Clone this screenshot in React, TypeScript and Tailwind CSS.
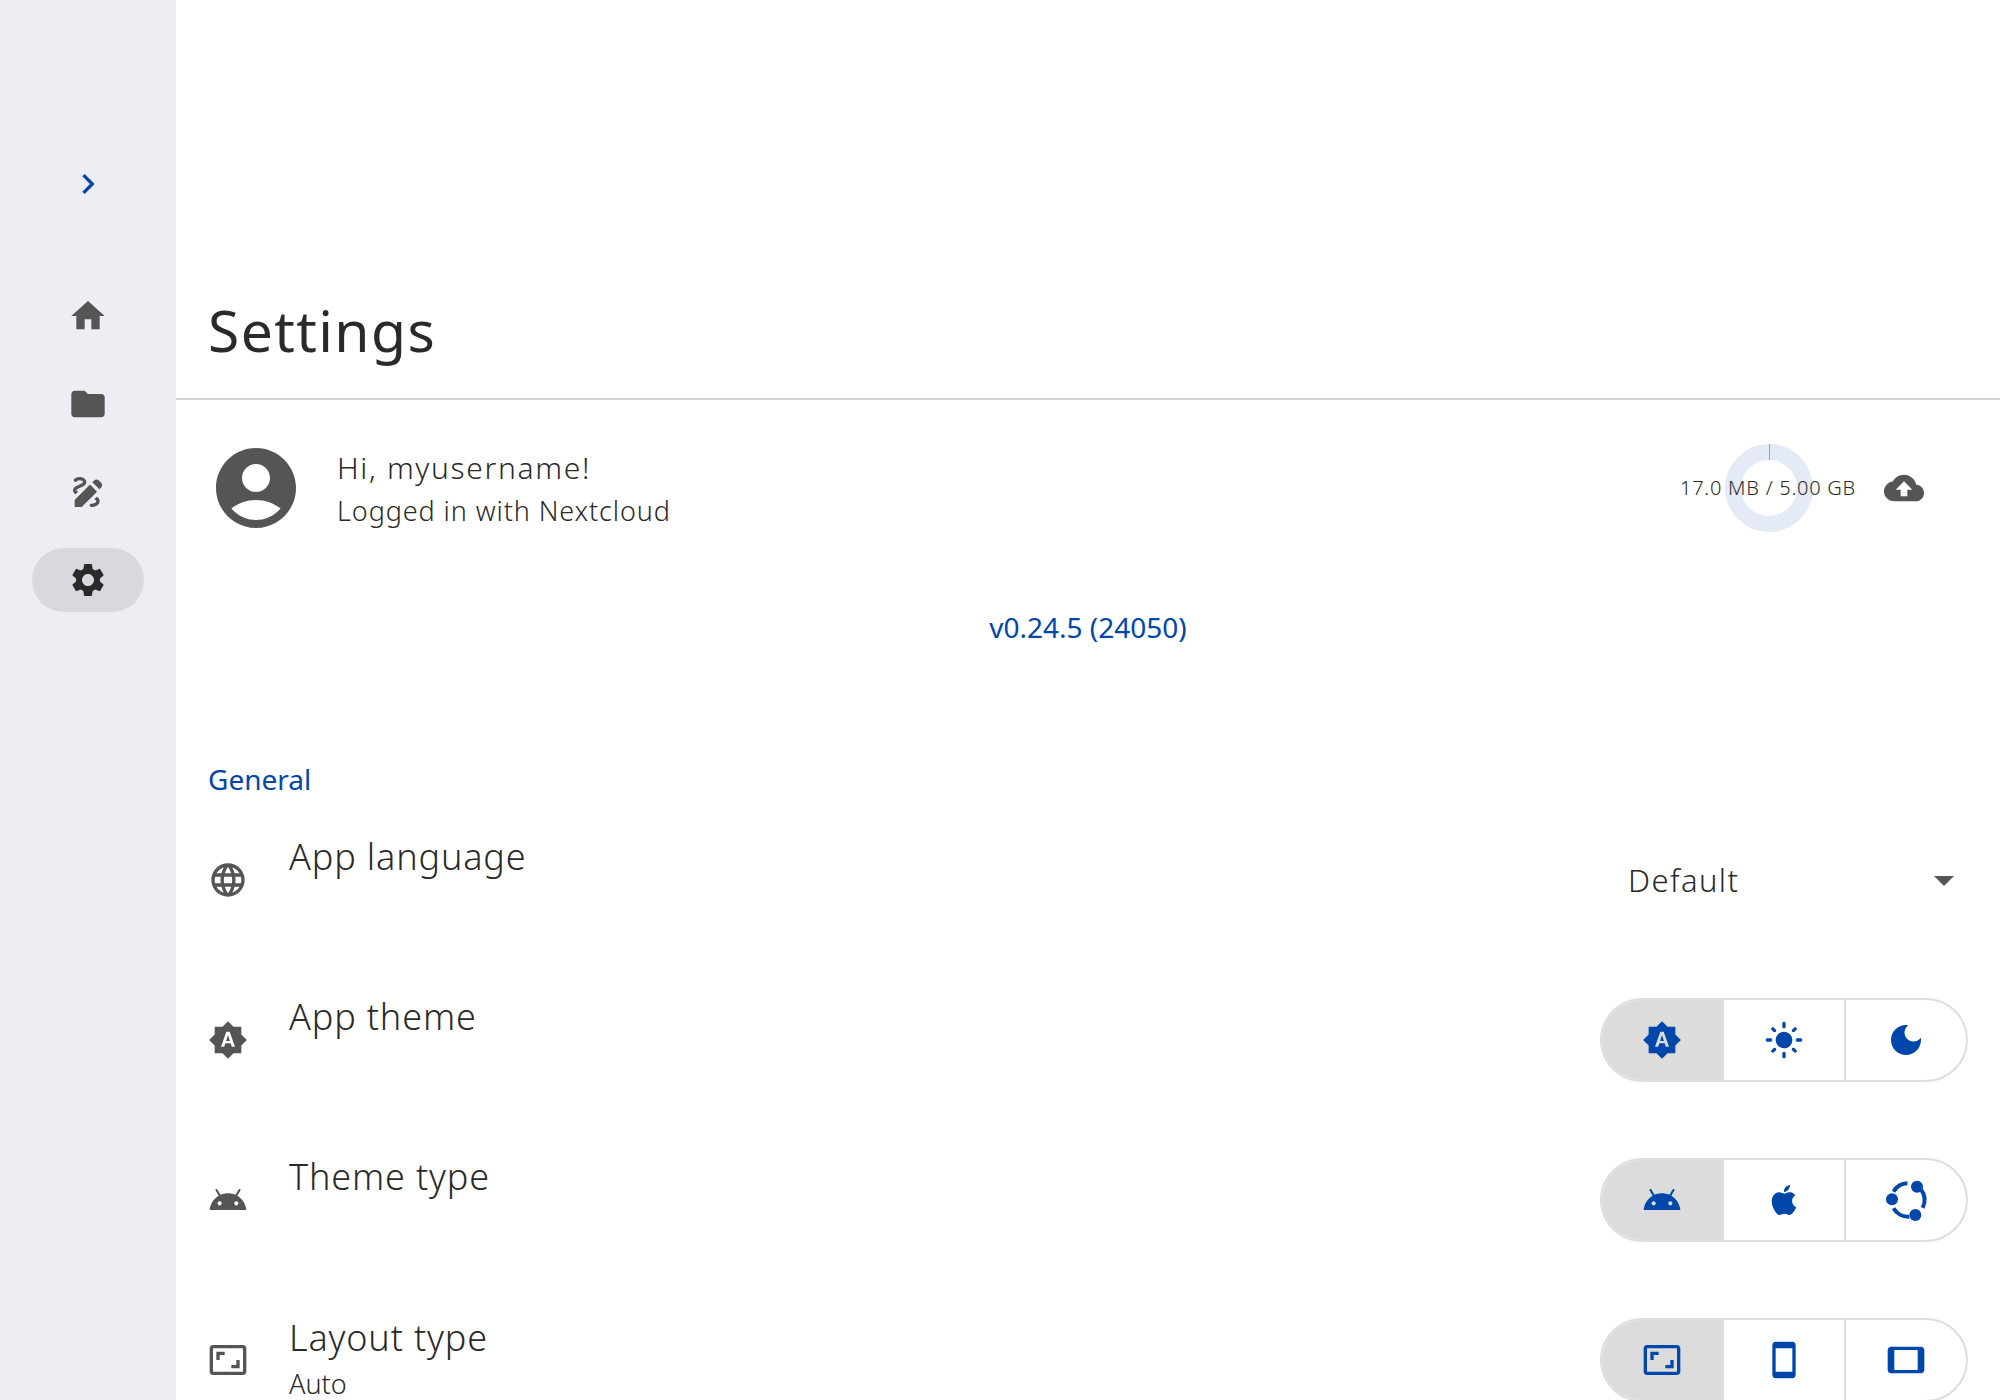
import type { ReactNode } from 'react'

const paths = {
  home: 'M10 20v-6h4v6h5v-8h3L12 3 2 12h3v8z',
  folder: 'M10 4H4c-1.1 0-1.99.9-1.99 2L2 18c0 1.1.9 2 2 2h16c1.1 0 2-.9 2-2V8c0-1.1-.9-2-2-2h-8l-2-2z',
  draw: 'M18.85 10.39l1.06-1.06c.78-.78.78-2.05 0-2.83L18.5 5.09c-.78-.78-2.05-.78-2.83 0l-1.06 1.06 4.24 4.24zm-5.66-2.83L4 16.76V21h4.24l9.19-9.19-4.24-4.25zM19 17.5c0 2.19-2.54 3.5-5 3.5-.55 0-1-.45-1-1s.45-1 1-1c1.54 0 3-.73 3-1.5 0-.47-.48-.87-1.23-1.2l1.48-1.48c1.07.63 1.75 1.47 1.75 2.68zM4.58 13.35C3.61 12.79 3 12.06 3 11c0-1.8 1.89-2.63 3.56-3.36C7.59 7.18 9 6.56 9 6c0-.41-.78-1-2-1-1.26 0-1.8.61-1.83.64-.35.41-.98.46-1.4.12-.41-.34-.49-.95-.15-1.38C3.73 4.24 4.76 3 7 3s4 1.32 4 3c0 1.87-1.93 2.72-3.64 3.47C6.42 9.88 5 10.5 5 11c0 .31.43.6 1.07.86l-1.49 1.49z',
  settings: 'M19.14 12.94c.04-.3.06-.61.06-.94 0-.32-.02-.64-.07-.94l2.03-1.58c.18-.14.23-.41.12-.61l-1.92-3.32c-.12-.22-.37-.29-.59-.22l-2.39.96c-.5-.38-1.03-.7-1.62-.94l-.36-2.54c-.04-.24-.24-.41-.48-.41h-3.84c-.24 0-.43.17-.47.41l-.36 2.54c-.59.24-1.13.57-1.62.94l-2.39-.96c-.22-.08-.47 0-.59.22L2.74 8.87c-.12.21-.08.47.12.61l2.03 1.58c-.05.3-.09.63-.09.94s.02.64.07.94l-2.03 1.58c-.18.14-.23.41-.12.61l1.92 3.32c.12.22.37.29.59.22l2.39-.96c.5.38 1.03.7 1.62.94l.36 2.54c.05.24.24.41.48.41h3.84c.24 0 .44-.17.47-.41l.36-2.54c.59-.24 1.13-.56 1.62-.94l2.39.96c.22.08.47 0 .59-.22l1.92-3.32c.12-.22.07-.47-.12-.61l-2.01-1.58zM12 15.6c-1.98 0-3.6-1.62-3.6-3.6s1.62-3.6 3.6-3.6 3.6 1.62 3.6 3.6-1.62 3.6-3.6 3.6z',
  chevron: 'M10 6L8.59 7.41 13.17 12l-4.58 4.59L10 18l6-6z',
  account: 'M12 2C6.48 2 2 6.48 2 12s4.48 10 10 10 10-4.48 10-10S17.52 2 12 2zm0 4c1.93 0 3.5 1.57 3.5 3.5S13.93 13 12 13s-3.5-1.57-3.5-3.5S10.07 6 12 6zm0 14c-2.03 0-4.43-.82-6.14-2.88C7.55 15.8 9.68 15 12 15s4.45.8 6.14 2.12C16.43 19.18 14.03 20 12 20z',
  upload: 'M19.35 10.04C18.67 6.59 15.64 4 12 4 9.11 4 6.6 5.64 5.35 8.04 2.34 8.36 0 10.91 0 14c0 3.31 2.69 6 6 6h13c2.76 0 5-2.24 5-5 0-2.64-2.05-4.78-4.65-4.96zM14 13v4h-4v-4H7l5-5 5 5h-3z',
  language: 'M11.99 2C6.47 2 2 6.48 2 12s4.47 10 9.99 10C17.52 22 22 17.52 22 12S17.52 2 11.99 2zm6.93 6h-2.95c-.32-1.25-.78-2.45-1.38-3.56 1.84.63 3.37 1.91 4.33 3.56zM12 4.04c.83 1.2 1.48 2.53 1.91 3.96h-3.82c.43-1.43 1.08-2.76 1.91-3.96zM4.26 14C4.1 13.36 4 12.69 4 12s.1-1.36.26-2h3.38c-.08.66-.14 1.32-.14 2 0 .68.06 1.34.14 2H4.26zm.82 2h2.95c.32 1.25.78 2.45 1.38 3.56-1.84-.63-3.37-1.9-4.33-3.56zm2.95-8H5.08c.96-1.66 2.49-2.93 4.33-3.56C8.81 5.55 8.35 6.75 8.03 8zM12 19.96c-.83-1.2-1.48-2.53-1.91-3.96h3.82c-.43 1.43-1.08 2.76-1.91 3.96zM14.34 14H9.66c-.09-.66-.16-1.32-.16-2 0-.68.07-1.35.16-2h4.68c.09.65.16 1.32.16 2 0 .68-.07 1.34-.16 2zm.25 5.56c.6-1.11 1.06-2.31 1.38-3.56h2.95c-.96 1.65-2.49 2.93-4.33 3.56zM16.36 14c.08-.66.14-1.32.14-2 0-.68-.06-1.34-.14-2h3.38c.16.64.26 1.31.26 2s-.1 1.36-.26 2h-3.38z',
  auto: 'M10.85 12.65h2.3L12 9l-1.15 3.65zM20 8.69V4h-4.69L12 .69 8.69 4H4v4.69L.69 12 4 15.31V20h4.69L12 23.31 15.31 20H20v-4.69L23.31 12 20 8.69zM14.3 16l-.7-2h-3.2l-.7 2H7.8L11 7h2l3.2 9h-1.9z',
  light: 'M12 7c-2.76 0-5 2.24-5 5s2.24 5 5 5 5-2.24 5-5-2.24-5-5-5zM2 13h2c.55 0 1-.45 1-1s-.45-1-1-1H2c-.55 0-1 .45-1 1s.45 1 1 1zm18 0h2c.55 0 1-.45 1-1s-.45-1-1-1h-2c-.55 0-1 .45-1 1s.45 1 1 1zM11 2v2c0 .55.45 1 1 1s1-.45 1-1V2c0-.55-.45-1-1-1s-1 .45-1 1zm0 18v2c0 .55.45 1 1 1s1-.45 1-1v-2c0-.55-.45-1-1-1s-1 .45-1 1zM5.99 4.58c-.39-.39-1.03-.39-1.41 0-.39.39-.39 1.03 0 1.41l1.06 1.06c.39.39 1.03.39 1.41 0s.39-1.03 0-1.41L5.99 4.58zm12.37 12.37c-.39-.39-1.03-.39-1.41 0-.39.39-.39 1.03 0 1.41l1.06 1.06c.39.39 1.03.39 1.41 0 .39-.39.39-1.03 0-1.41l-1.06-1.06zm1.06-10.96c.39-.39.39-1.03 0-1.41-.39-.39-1.03-.39-1.41 0l-1.06 1.06c-.39.39-.39 1.03 0 1.41s1.03.39 1.41 0l1.06-1.06zM7.05 18.36c.39-.39.39-1.03 0-1.41-.39-.39-1.03-.39-1.41 0l-1.06 1.06c-.39.39-.39 1.03 0 1.41s1.03.39 1.41 0l1.06-1.06z',
  dark: 'M12 3c-4.97 0-9 4.03-9 9s4.03 9 9 9 9-4.03 9-9c0-.46-.04-.92-.1-1.36-.98 1.37-2.58 2.26-4.4 2.26-2.98 0-5.4-2.42-5.4-5.4 0-1.81.89-3.42 2.26-4.4-.44-.06-.9-.1-1.36-.1z',
  android: 'M17.6 9.48l1.84-3.18c.16-.31.04-.69-.26-.85-.29-.15-.65-.06-.83.22l-1.88 3.24c-2.86-1.21-6.08-1.21-8.94 0L5.65 5.67c-.19-.29-.58-.38-.87-.2-.28.18-.37.54-.22.83L6.4 9.48C3.3 11.25 1.34 14.44 1 18h22c-.34-3.56-2.3-6.75-5.4-8.52zM7 15.25c-.69 0-1.25-.56-1.25-1.25s.56-1.25 1.25-1.25 1.25.56 1.25 1.25-.56 1.25-1.25 1.25zm10 0c-.69 0-1.25-.56-1.25-1.25s.56-1.25 1.25-1.25 1.25.56 1.25 1.25-.56 1.25-1.25 1.25z',
  apple: 'M18.71 19.5c-.83 1.24-1.71 2.45-3.05 2.47-1.34.03-1.77-.79-3.29-.79-1.53 0-2 .77-3.27.82-1.31.05-2.3-1.32-3.14-2.53C4.25 17 2.94 12.45 4.7 9.39c.87-1.52 2.43-2.48 4.12-2.51 1.28-.02 2.5.87 3.29.87.78 0 2.26-1.07 3.81-.91.65.03 2.47.26 3.64 1.98-.09.06-2.17 1.28-2.15 3.81.03 3.02 2.65 4.03 2.68 4.04-.03.07-.42 1.44-1.38 2.83M13 3.5c.73-.83 1.94-1.46 2.94-1.5.13 1.17-.34 2.35-1.04 3.19-.69.85-1.83 1.51-2.95 1.42-.15-1.15.41-2.35 1.05-3.11z',
  aspect: 'M19 12h-2v3h-3v2h5v-5zM7 9h3V7H5v5h2V9zm14-6H3c-1.1 0-2 .9-2 2v14c0 1.1.9 2 2 2h18c1.1 0 2-.9 2-2V5c0-1.1-.9-2-2-2zm0 16.01H3V4.99h18v14.02z',
  phone: 'M17 1.01L7 1c-1.1 0-2 .9-2 2v18c0 1.1.9 2 2 2h10c1.1 0 2-.9 2-2V3c0-1.1-.9-1.99-2-1.99zM17 19H7V5h10v14z',
  tablet: 'M21 4H3c-1.1 0-2 .9-2 2v12c0 1.1.9 2 2 2h18c1.1 0 1.99-.9 1.99-2L23 6c0-1.1-.9-2-2-2zm-2 14H5V6h14v12z',
  caret: 'M7 10l5 5 5-5z',
}

type IconName = keyof typeof paths

function Icon({ name, className }: { name: IconName; className: string }) {
  return (
    <svg viewBox="0 0 24 24" fill="currentColor" className={className}>
      <path d={paths[name]} />
    </svg>
  )
}

function UbuntuIcon() {
  return (
    <svg viewBox="0 0 24 24" className="h-10 w-10 overflow-visible text-[#0047ab]" fill="currentColor">
      <g fill="none" stroke="currentColor" strokeWidth="2.4">
        <path d="M4.5 7A10 10 0 0 1 12.9 2" />
        <path d="M20.9 5.6A10 10 0 0 1 22 16.7" />
        <path d="M14 22A10 10 0 0 1 4.5 17" />
      </g>
      <circle cx="18.6" cy="4" r="3.6" />
      <circle cx="17.6" cy="21" r="3.6" />
      <circle cx="3.6" cy="11.6" r="3.6" />
    </svg>
  )
}

function NavItem({ name, active }: { name: IconName; active?: boolean }) {
  return (
    <div className={`flex h-16 w-[112px] items-center justify-center rounded-full ${active ? 'bg-[#d9d8de]' : ''}`}>
      <Icon name={name} className={`h-10 w-10 ${active ? 'text-[#2a2a2a]' : 'text-[#555555]'}`} />
    </div>
  )
}

function Segmented({ items }: { items: ReactNode[] }) {
  return (
    <div className="flex h-[84px] w-[368px] shrink-0 overflow-hidden rounded-full border-2 border-[#dedede]">
      {items.map((item, i) => (
        <div
          key={i}
          className={`flex flex-1 items-center justify-center ${i === 0 ? 'bg-[#dcdcdc]' : 'border-l-2 border-[#dedede]'}`}
        >
          {item}
        </div>
      ))}
    </div>
  )
}

function SegIcon({ name }: { name: IconName }) {
  return <Icon name={name} className="h-10 w-10 text-[#0047ab]" />
}

function Row({ icon, label, sub, children }: { icon: IconName; label: string; sub?: string; children: ReactNode }) {
  return (
    <div className="flex h-40 shrink-0 items-center pl-[208px] pr-8">
      <Icon name={icon} className="h-10 w-10 shrink-0 text-[#555555]" />
      <div className={`ml-10 flex-1 self-start pl-px text-[#2a2a2a] ${sub ? 'pt-[35px]' : 'pt-[34px]'}`}>
        <div className="text-[36px] leading-[46px] font-light tracking-[0.85px]">{label}</div>
        {sub && <div className="mt-[6px] text-[27px] leading-[34px] font-light">{sub}</div>}
      </div>
      {children}
    </div>
  )
}

export default function App() {
  return (
    <div className="flex h-[1400px] w-[2000px] overflow-hidden bg-white font-['Noto_Sans',sans-serif] text-[#2a2a2a]">
      <aside className="flex w-[176px] shrink-0 flex-col items-center gap-6 bg-[#eeedf3] pt-[164px]">
        <Icon name="chevron" className="mb-14 h-10 w-10 text-[#0047ab]" />
        <NavItem name="home" />
        <NavItem name="folder" />
        <NavItem name="draw" />
        <NavItem name="settings" active />
      </aside>

      <main className="relative flex flex-1 flex-col">
        <div className="flex h-[400px] shrink-0 items-end border-b-2 border-[#d4d4d4] pb-[28px] pl-8">
          <h1 className="text-[57px] leading-[80px] font-normal tracking-[1.4px]">Settings</h1>
        </div>

        <div className="flex h-[176px] shrink-0 items-center pl-8 pr-[76px]">
          <Icon name="account" className="h-24 w-24 shrink-0 text-[#555555]" />
          <div className="ml-[33px] flex-1">
            <div className="text-[30px] leading-[44px] font-light tracking-[1.65px]">Hi, myusername!</div>
            <div className="mt-px text-[27px] leading-[40px] font-light tracking-[0.9px]">Logged in with Nextcloud</div>
          </div>
          <div className="relative flex h-[88px] items-center">
            <div className="absolute top-0 left-[45px] h-[88px] w-[88px] rounded-full border-[16px] border-[#e4eaf6]" />
            <div className="absolute top-0 left-[89px] h-4 w-px bg-[#8aa9dc]" />
            <span className="relative text-[20px] font-light tracking-[0.75px]">17.0 MB / 5.00 GB</span>
          </div>
          <Icon name="upload" className="ml-7 h-10 w-10 shrink-0 text-[#555555]" />
        </div>

        <div className="flex h-[104px] shrink-0 items-center justify-center pb-[2px]">
          <span className="text-[28px] text-[#0047ab]">v0.24.5 (24050)</span>
        </div>

        <div className="flex h-[120px] shrink-0 items-end pb-px pl-8">
          <span className="text-[28px] leading-10 text-[#0047ab]">General</span>
        </div>

        <div className="-ml-[176px] flex flex-col">
          <Row icon="language" label="App language">
            <div className="flex w-[368px] shrink-0 items-center justify-between pl-7">
              <span className="text-[31px] font-light tracking-[1.4px]">Default</span>
              <Icon name="caret" className="h-12 w-12 text-[#555555]" />
            </div>
          </Row>
          <Row icon="auto" label="App theme">
            <Segmented items={[<SegIcon name="auto" />, <SegIcon name="light" />, <SegIcon name="dark" />]} />
          </Row>
          <Row icon="android" label="Theme type">
            <Segmented items={[<SegIcon name="android" />, <Icon name="apple" className="h-9 w-9 text-[#0047ab]" />, <UbuntuIcon />]} />
          </Row>
          <Row icon="aspect" label="Layout type" sub="Auto">
            <Segmented items={[<SegIcon name="aspect" />, <SegIcon name="phone" />, <SegIcon name="tablet" />]} />
          </Row>
        </div>
      </main>
    </div>
  )
}
